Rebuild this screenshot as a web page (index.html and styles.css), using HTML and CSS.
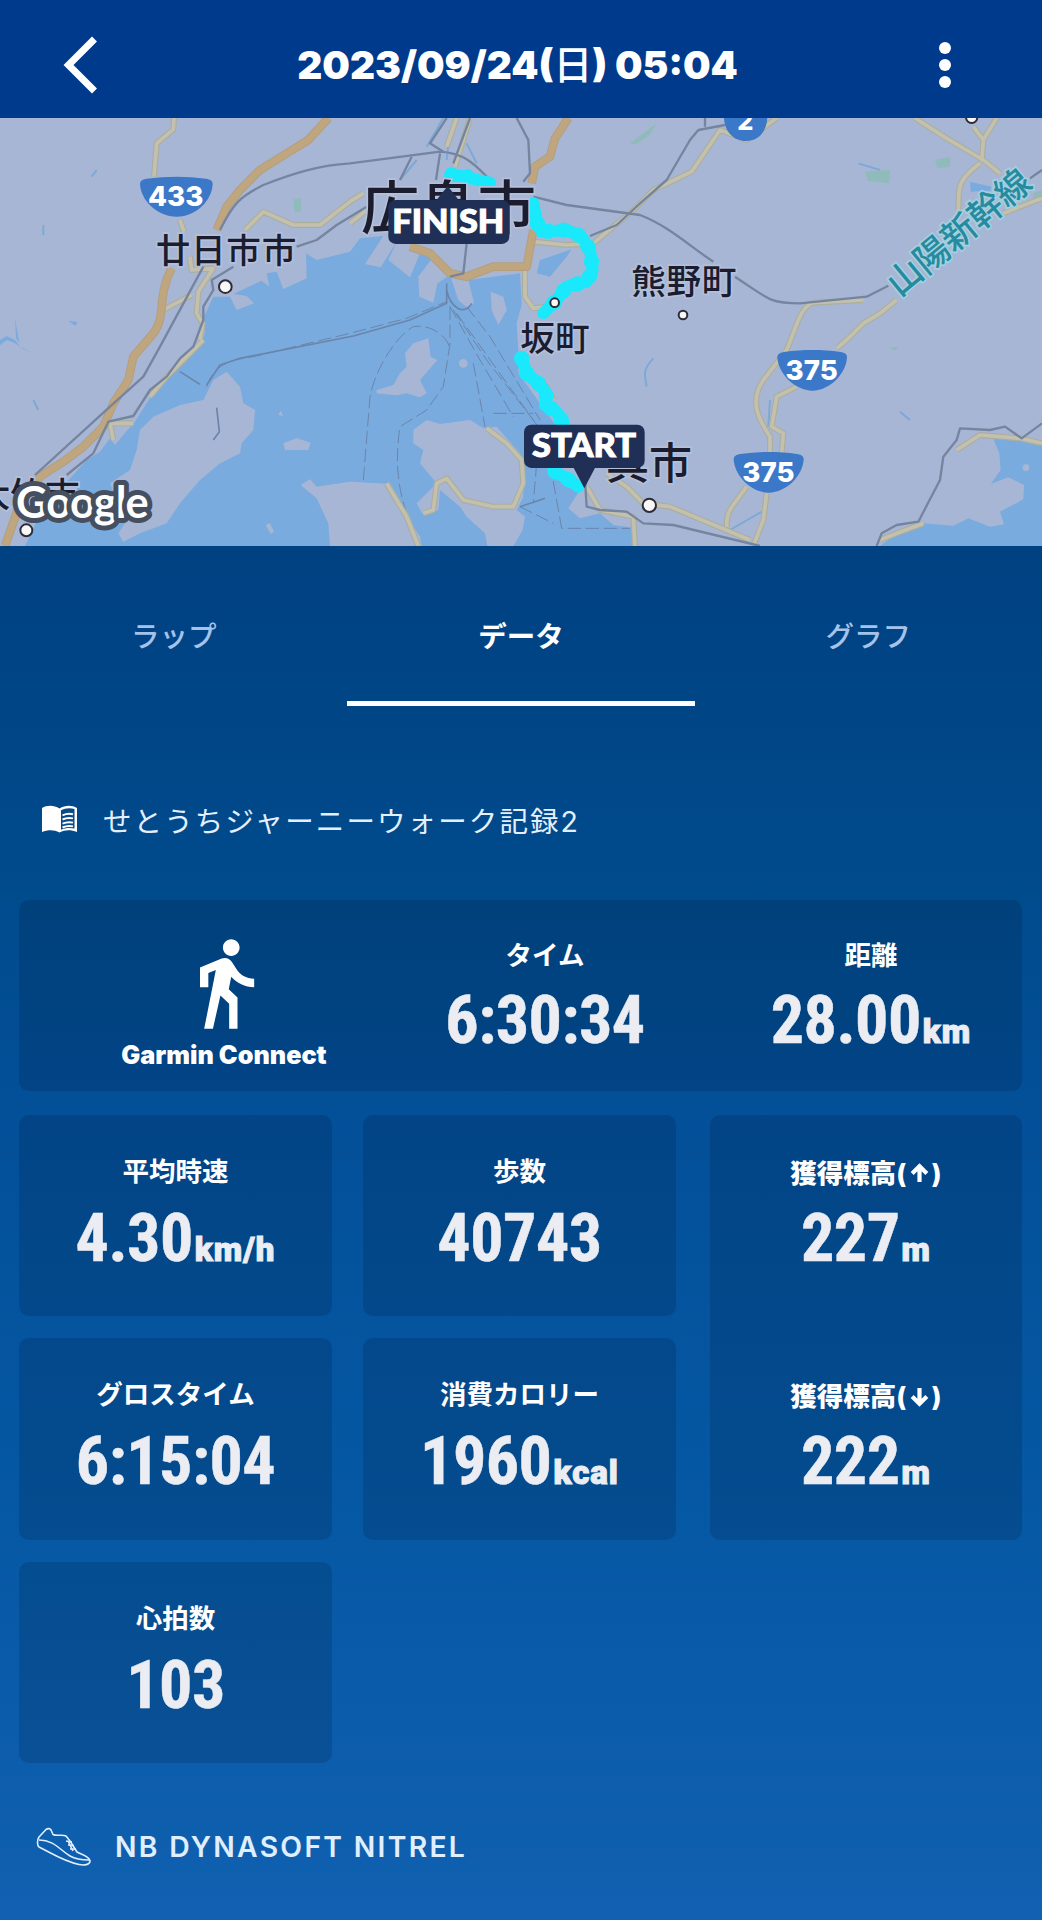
FILE: index.html
```html
<!DOCTYPE html>
<html lang="ja">
<head>
  <meta charset="UTF-8">
  <meta name="viewport" content="width=device-width, initial-scale=1">
  <title>2023/09/24(日) 05:04</title>
  <link rel="stylesheet" href="styles.css">
</head>
<body>
  <!-- Header -->
  <header class="header">
    <svg class="back-icon" viewBox="0 0 34 58"><path d="M31.500 3L5.500 29L31.500 55"/></svg>
    <h1 class="title">2023/09/24(<span class="weekday">日</span>) 05:04</h1>
    <svg class="menu-icon" viewBox="0 0 14 46"><circle cx="7" cy="6" r="6"/><circle cx="7" cy="23" r="6"/><circle cx="7" cy="40" r="6"/></svg>
  </header>

  <!-- Map -->
  <svg class="map" viewBox="0 24 3126 1284" preserveAspectRatio="none">
    <rect class="land" y="24" width="3126" height="1284"/>

    <!-- Sea -->
    <g class="water">
      <path d="M75 1308L130 1190L215 1100L260 1050L300 1025L330 985L345 1005L365 980L405 935L430 895L470 835L530 775L590 720L615 670L612 620L640 560L690 560L710 600L762 580L740 558L700 552L785 512L808 530L800 490L830 485L850 537L920 505L918 430L950 450L1050 425L1080 385L1150 378L1095 462L1142 472L1190 395L1165 450L1230 502L1262 425L1300 440L1255 500L1258 560L1300 578L1312 520L1350 495L1375 570L1400 592L1422 580L1405 510L1560 490L1565 585L1550 640L1555 720L1555 790L1620 880L1670 950L1655 1080L1740 1140L1705 1195L1740 1225L1800 1210L1840 1245L1910 1255L1900 1308Z"/>
      <path d="M1620 450L1715 418L1700 440L1650 500L1610 490Z"/>
      <path d="M2975 975L3030 985L3126 1005V1308H2640L2690 1270L2770 1240L2860 1247L2905 1225L2970 1250L3012 1243L3000 1205L3070 1168L3072 1125L3025 1102L2972 1122L3002 1080L2998 1030Z"/>
      <path d="M2910 215L2975 230L2970 242L2912 245Z"/>
      <path d="M0 690L20 678L45 690L60 710L110 735L65 715L45 700L20 690L0 706Z"/>
      <path d="M45 625L58 700L48 685ZM205 632L232 636L226 648Z"/>
    </g>
    <g class="stream">
      <path d="M1330 24L1280 110M1400 100L1430 160M1250 150L1200 210M1350 60L1340 150M2310 870L2305 950M2190 1260L2285 1205M2700 905L2730 930M100 870L115 900M130 345V375M290 180L275 200M2575 160L2640 180"/>
      <path d="M1960 745C1925 780 1935 800 1940 830"/>
    </g>

    <!-- Islands -->
    <g class="land">
      <path d="M680 785L720 830L730 880L765 900L760 960L725 1000L720 1030L660 1060L600 1110L540 1180L500 1240L420 1270L370 1295L355 1270L375 1240L330 1120L390 1080L410 1020L420 960L460 920L540 885L610 870L640 810Z"/>
      <path d="M902 1125L930 1108L950 1130L1050 1115L1170 1122L1195 1180L1260 1280L1265 1308H990L985 1240L950 1165Z"/>
      <path d="M850 1000L890 985L932 998L925 1020L855 1020ZM835 915L842 902L850 918ZM797 1245L810 1240L822 1265L812 1272Z"/>
      <path d="M1240 960L1280 930L1320 942L1410 930L1450 955L1490 950L1560 1030L1570 1110L1570 1160L1550 1200L1575 1220L1568 1260L1540 1308H1462L1455 1270L1400 1220L1380 1190L1320 1140L1315 1200L1270 1215L1250 1180L1310 1120L1260 1060L1270 1020L1240 1000Z"/>
      <path d="M1285 685L1292 740L1312 750L1260 810L1280 850L1260 862L1220 850L1190 856L1130 850V840L1180 825L1200 790L1220 770L1215 730L1240 700Z"/>
      <path d="M1472 545L1510 560L1520 600L1495 645L1475 600Z"/>
      <circle cx="1390" cy="760" r="13"/>
      <circle cx="3078" cy="1073" r="10"/>
    </g>
    <g class="park">
      <path d="M880 268L905 265L902 305L884 308ZM2595 185L2670 180L2668 220L2605 212ZM2805 150L2850 140L2850 170L2812 175ZM2668 712L2695 710L2685 722ZM3100 250L3126 240V270L3100 265ZM1890 100L1970 40L1950 75L1905 104Z"/>
    </g>

    <!-- Ferry lines -->
    <g class="ferry">
      <path d="M620 830C640 770 680 750 760 740L1050 670L1220 625L1340 575"/>
      <path d="M1350 590V700L1330 830L1280 900L1200 950C1180 1080 1200 1180 1250 1280"/>
      <path d="M1090 1110L1110 860C1130 760 1200 670 1240 650C1300 640 1350 690 1350 720"/>
      <path d="M1350 590L1440 750L1540 920M1360 600L1460 750L1600 930M1370 610L1650 1000M1400 590L1470 680L1620 930M1420 760L1455 950M1480 910H1600M1650 1060L1685 1255H1890M1560 1190L1660 1240M1610 1060L1600 1180"/>
    </g>
    <path class="ferry solid" d="M620 825L660 765L720 745L1060 678L1230 630L1340 580L1340 520M1340 540C1350 590 1390 620 1415 580M650 893L658 965L640 990M540 785L600 823M1560 1190L1635 1165"/>

    <!-- Local roads -->
    <g class="road-edge">
      <path id="roads" d="M522 24L520 58L470 100L462 200M540 330L552 365M480 605L575 555M735 360L790 305L880 345H960L1050 275L1090 250M570 440L575 480L640 475L595 545L590 610L608 640L600 690M610 690L560 740L500 800L450 860M1050 340L1100 300M1370 24L1340 110M1410 24L1365 170M1600 395L1700 405L1780 400L1900 300L1960 240L2075 185L2160 60L2240 90L2330 24M1575 480V560L1600 595L1640 590M1600 800L1640 830L1660 870M1460 955L1520 1000L1565 1050L1570 1120L1540 1190L1480 1190L1390 1170L1340 1105L1310 1120L1300 1200L1270 1210M1160 1120L1220 1220L1255 1308M1760 1130L1800 1200L1900 1220L1905 1308M1820 1090L1880 1130L1930 1180L2010 1190L2250 1290M2745 24L2840 85L2950 150L3000 190M2920 50L2950 90L2945 155M2990 24L2950 90M2940 160C2860 220 2880 240 2875 300M3010 310L3060 290L3126 265M2590 570L2440 578C2400 590 2390 650 2360 720L2290 810C2250 870 2270 920 2310 980L2310 1030M2690 570L2640 610L2590 640L2540 690L2510 715M2390 830L2330 860L2315 950L2350 970L2345 1030M2240 1130C2190 1200 2180 1200 2180 1250M2300 1150L2290 1230L2260 1308M2640 1290L2690 1270L2770 1240M2870 1020L2940 975L3060 985L3126 1000M340 990L330 940L400 940"/>
    </g>
    <use class="road" href="#roads"/>

    <!-- Highways -->
    <path class="highway-edge" d="M985 24L925 90L860 130L780 180L720 240L680 290L650 360M515 475C470 560 500 620 460 670L400 740L385 810L340 880L310 950L250 1010L190 1055L120 1100L60 1180L15 1308M1705 24L1665 85L1650 140L1605 170L1595 220M1600 360L1580 470L1480 470L1400 500L1350 490L1290 430L1230 410"/>
    <path class="highway" d="M985 24L925 90L860 130L780 180L720 240L680 290L650 360M515 475C470 560 500 620 460 670L400 740L385 810L340 880L310 950L250 1010L190 1055L120 1100L60 1180L15 1308M1705 24L1665 85L1650 140L1605 170L1595 220M1600 360L1580 470L1480 470L1400 500L1350 490L1290 430L1230 410"/>

    <!-- Railways -->
    <g class="rail">
      <path d="M105 1095L330 890L430 800L480 710L610 470M660 360C700 280 720 260 790 225C880 190 960 165 1050 160L1320 125C1400 130 1430 170 1465 205M200 1095L280 1030L325 935L400 918L450 840L500 800L540 745L580 710L610 630V590L640 540L635 510L700 470M890 410L950 390L1010 345L1100 290"/>
      <path d="M1340 24L1290 100L1330 125M1410 24L1360 160M1235 140L1200 210M1320 130L1308 210M1550 24L1585 90L1590 190L1570 215M1400 400L1390 490L1350 500"/>
      <path d="M1600 260L1700 285L1920 315C2010 350 2070 410 2140 455M2205 500C2310 570 2310 580 2400 580L2600 560L2665 527M1770 378L1850 345L1920 280L2000 210L2070 90L2095 60L2175 45M2115 24V50M3090 205L3126 180"/>
      <path d="M1755 1110L1760 1190L1800 1200L1880 1205L1930 1240L2020 1245L2280 1308M2630 1308L2645 1270L2690 1245L2755 1235L2820 1110L2830 1040L2870 990L2880 955L2970 960L3015 950L3065 985L3126 940"/>
    </g>

    <!-- Recorded route -->
    <g class="route">
      <path d="M1355 195L1400 200L1440 212L1470 218M1600 280L1612 340L1625 365L1700 360L1745 380L1770 420L1778 480L1760 515L1700 530L1670 570L1630 610"/>
      <path class="route-dots" d="M1355 195L1400 200L1440 212M1612 340L1625 365L1700 360L1745 380L1770 420L1778 480L1760 515L1700 530L1670 570L1630 610"/>
      <path d="M1565 745L1580 790L1615 820L1640 850L1635 885L1670 905L1690 940M1665 1085L1700 1105L1735 1130"/>
      <path class="route-dots" d="M1565 745L1580 790L1615 820L1640 850L1635 885L1670 905L1690 940M1665 1085L1700 1105L1735 1130"/>
    </g>

    <!-- Route shields -->
    <g class="shield">
      <path d="M420 222C420 212 428 208 440 206C500 198 560 198 618 206C630 208 638 212 638 222C636 270 590 320 530 320C470 320 422 270 420 222Z"/>
      <path d="M2332 742C2332 732 2340 728 2352 726C2410 718 2465 718 2522 726C2534 728 2541 732 2541 742C2539 790 2490 842 2437 842C2384 842 2334 790 2332 742Z"/>
      <path d="M2201 1048C2201 1038 2209 1034 2221 1032C2279 1024 2334 1024 2391 1032C2403 1034 2411 1038 2411 1048C2409 1096 2360 1148 2306 1148C2252 1148 2203 1096 2201 1048Z"/>
      <path d="M2172 24H2302C2300 65 2275 93 2238 93C2200 93 2174 65 2172 24Z"/>
      <text x="527" y="289">433</text>
      <text x="2435" y="809">375</text>
      <text x="2305" y="1115">375</text>
      <text x="2236" y="61" class="small">2</text>
    </g>

    <!-- City markers -->
    <g class="city">
      <circle cx="676" cy="530" r="19"/>
      <circle cx="79" cy="1261" r="18"/>
      <circle cx="1664" cy="578" r="13"/>
      <circle cx="2049" cy="615" r="13"/>
      <circle cx="1948" cy="1186" r="20"/>
      <circle cx="2915" cy="22" r="17"/>
    </g>

    <!-- Place names -->
    <g class="place">
      <text x="467" y="459" textLength="422">廿日市市</text>
      <text x="1083" y="358" class="major">広島市</text>
      <text x="1561" y="722">坂町</text>
      <text x="1894" y="552" textLength="315">熊野町</text>
      <text x="1818" y="1108" class="city-name">呉市</text>
      <text x="-73" y="1192">大竹市</text>
      <text class="line-name" transform="translate(2698 563) rotate(-39.500)">山陽新幹線</text>
    </g>

    <!-- Pins -->
    <g class="pin">
      <rect x="1165" y="270" width="363" height="132" rx="22"/>
      <path d="M1308 272L1343 228L1378 272Z"/>
      <text x="1345" y="369" textLength="336" lengthAdjust="spacingAndGlyphs">FINISH</text>
      <rect x="1572" y="944" width="362" height="130" rx="22"/>
      <path d="M1720 1072H1786L1753 1135Z"/>
      <text x="1752" y="1042" textLength="312" lengthAdjust="spacingAndGlyphs">START</text>
    </g>
    <text class="google" x="48" y="1223" textLength="398">Google</text>
  </svg>

  <main class="content">
    <!-- Tabs -->
    <nav class="tabs">
      <div class="tab">ラップ</div>
      <div class="tab active">データ</div>
      <div class="tab">グラフ</div>
    </nav>

    <!-- Memo -->
    <div class="memo">
      <svg class="book-icon" viewBox="0 0 35 27">
        <path class="book-fill" d="M0 2.500C5-.500 12-.500 17.500 3C23-.500 30-.500 35 2.500V26.500C29 24 23 24 17.500 27C12 24 6 24 0 26.500Z"/>
        <path class="book-page" d="M19 4.800C23 2.500 28 2.200 32.500 3.500V23C28 22 23 22.300 19 24.200Z"/>
        <path class="book-lines" d="M20.500 9.800C24 8.200 28 8 31 8.700M20.500 14C24 12.400 28 12.200 31 12.900M20.500 18.200C24 16.600 28 16.400 31 17.100M20.500 22C24 20.400 28 20.200 31 20.900"/>
      </svg>
      <span>せとうちジャーニーウォーク記録2</span>
    </div>

    <!-- Summary -->
    <section class="card summary">
      <div class="source">
        <svg class="walk-icon" viewBox="0 0 24 24"><path d="M13.500 5.500c1.100 0 2-.9 2-2s-.9-2-2-2-2 .9-2 2 .9 2 2 2zM9.800 8.900L7 23h2.100l1.800-8 2.100 2v6h2v-7.500l-2.100-2 .6-3C14.800 12 16.800 13 19 13v-2c-1.900 0-3.500-1-4.300-2.400l-1-1.600c-.4-.6-1-1-1.700-1-.3 0-.5.1-.8.1L6 8.300V13h2V9.600l1.800-.7z"/></svg>
        <div class="source-name">Garmin Connect</div>
      </div>
      <div class="stat">
        <div class="label">タイム</div>
        <div class="value">6:30:34</div>
      </div>
      <div class="stat">
        <div class="label">距離</div>
        <div class="value">28.00<span class="unit">km</span></div>
      </div>
    </section>

    <!-- Details -->
    <section class="grid">
      <div class="card stat">
        <div class="label">平均時速</div>
        <div class="value">4.30<span class="unit">km/h</span></div>
      </div>
      <div class="card stat">
        <div class="label">歩数</div>
        <div class="value">40743</div>
      </div>
      <div class="card tall">
        <div class="stat">
          <div class="label elevation">獲得標高(<svg class="arrow" viewBox="0 0 18 20"><path d="M9 18V3M2 10L9 3L16 10"/></svg>)</div>
          <div class="value">227<span class="unit">m</span></div>
        </div>
        <div class="stat">
          <div class="label elevation">獲得標高(<svg class="arrow" viewBox="0 0 18 20"><path d="M9 2V17M2 10L9 17L16 10"/></svg>)</div>
          <div class="value">222<span class="unit">m</span></div>
        </div>
      </div>
      <div class="card stat">
        <div class="label">グロスタイム</div>
        <div class="value">6:15:04</div>
      </div>
      <div class="card stat">
        <div class="label">消費カロリー</div>
        <div class="value">1960<span class="unit">kcal</span></div>
      </div>
      <div class="card stat">
        <div class="label">心拍数</div>
        <div class="value">103</div>
      </div>
    </section>

    <!-- Shoes -->
    <div class="shoes">
      <svg class="shoe-icon" viewBox="0 0 56 40">
        <path d="M3 10L10 2.500C12 1 14 1.500 15 3L17 7.500C21 9.500 26 7 30 9L34 14L41 25C46 28 53 29 54 34C54 38 48 38.500 43 37.500C27 34 17 27 3 20C1 18 1 13 3 10Z"/>
        <path d="M3 13C18 13 24 23 34 29C41 33 48 33 53 33M30 14L36 15M32 18L38 18.500M34 22L40 22M32 14L37 24"/>
      </svg>
      <span>NB DYNASOFT NITREL</span>
    </div>
  </main>
</body>
</html>
```
FILE: styles.css
```css
:root {
  --color-header: #003a8c;
  --color-card: rgba(0, 20, 50, 0.18);
  --color-value: #ebedf3;
  --color-land: #a8b6d5;
  --color-water: #7aabdf;
  --color-pin: #1f2f55;
  --font-family: Inter, "Noto Sans CJK JP", sans-serif;
  --radius: 10px;
}

* {
  box-sizing: border-box;
  margin: 0;
  padding: 0;
}

body {
  width: 1042px;
  height: 1920px;
  overflow: hidden;
  font-family: var(--font-family);
  color: #fff;
  background: #00407f;
}

svg {
  display: block;
}

/* === Header === */
.header {
  display: flex;
  align-items: center;
  justify-content: space-between;
  height: 118px;
  padding: 11px 90px 0 66px;
  background: var(--color-header);
}
.back-icon {
  width: 34px;
  height: 58px;
  margin-left: -3px;
  fill: none;
  stroke: #fff;
  stroke-width: 7;
}
.title {
  font-size: 38.8px;
  font-weight: 900;
  line-height: 50px;
  white-space: nowrap;
}
.weekday {
  font-weight: 500;
}
.menu-icon {
  width: 14px;
  height: 46px;
  fill: #fff;
}

/* === Map === */
.map {
  width: 1042px;
  height: 428px;
}
.land { fill: var(--color-land); }
.water { fill: var(--color-water); }
.park { fill: #8fbcba; }
.stream {
  fill: none;
  stroke: #7da9d6;
  stroke-width: 6;
}
.road-edge, .road, .highway-edge, .highway, .rail, .ferry, .route {
  fill: none;
  stroke-linejoin: round;
}
.road-edge { stroke: #abae9f; stroke-width: 18; }
.road { stroke: #c3c1ae; stroke-width: 11; }
.highway-edge { stroke: #b39f80; stroke-width: 26; }
.highway { stroke: #bfa67f; stroke-width: 20; }
.rail { stroke: #75849f; stroke-width: 7; }
.ferry {
  stroke: #6a85ab;
  stroke-width: 3;
  stroke-dasharray: 40 14;
}
.ferry.solid {
  stroke-width: 5;
  stroke-dasharray: none;
}
.route {
  stroke: #19e9fb;
  stroke-width: 36;
  stroke-linecap: round;
}
.route-dots {
  stroke-width: 46;
  stroke-dasharray: 1 46;
}
.shield {
  fill: #3c78c8;
}
.shield text {
  fill: #fff;
  font: 800 83px Inter, sans-serif;
  text-anchor: middle;
}
.shield .small { font-size: 76px; }
.city {
  fill: #f8f6f6;
  stroke: #2b2c37;
  stroke-width: 6;
}
.place {
  fill: #1b1d2f;
  stroke: #b4c0da;
  stroke-width: 10;
  paint-order: stroke;
  font: 500 104px "Noto Sans CJK JP", sans-serif;
}
.place .major { font-size: 175px; }
.place .city-name { font-size: 129px; }
.place .line-name {
  fill: #258b9f;
  stroke: #a5cfdf;
  font-size: 105px;
}
.pin { fill: var(--color-pin); }
.pin text {
  fill: #fff;
  stroke: #fff;
  stroke-width: 3;
  font: 900 95px Lato, sans-serif;
  text-anchor: middle;
}
.google {
  fill: #fff;
  stroke: #454f60;
  stroke-width: 30;
  stroke-linejoin: round;
  paint-order: stroke;
  font: 700 130px Lato, sans-serif;
}

/* === Content === */
.content {
  height: 1374px;
  padding: 0 20px 0 19px;
  background: linear-gradient(#004182 0%, #004b8c 25%, #034f98 40%, #0558a4 70%, #1160b1 100%);
}

/* === Tabs === */
.tabs {
  display: flex;
  height: 160px;
  margin: 0 -20px 0 -19px;
}
.tab {
  flex: 1;
  padding-top: 70px;
  border-bottom: 5px solid transparent;
  font-size: 28.5px;
  font-weight: 500;
  line-height: 42px;
  text-align: center;
  color: #a5c3ea;
}
.tab.active {
  border-color: #fff;
  font-weight: 700;
  color: #fff;
}

/* === Memo === */
.memo {
  display: flex;
  align-items: center;
  gap: 26px;
  height: 44px;
  margin-top: 94px;
  padding-left: 23px;
  font-size: 28.5px;
  letter-spacing: 2.1px;
  line-height: 44px;
  color: #e4f0ff;
}
.book-icon {
  width: 35px;
  height: 28px;
  margin-top: -6px;
}
.book-fill { fill: #fff; }
.book-page { fill: #064a8a; }
.book-lines {
  fill: none;
  stroke: #fff;
  stroke-width: 2;
}

/* === Cards === */
.card {
  background: var(--color-card);
  border-radius: var(--radius);
}
.stat {
  padding-top: 36px;
  text-align: center;
}
.label {
  font-size: 26.5px;
  font-weight: 600;
  line-height: 40px;
}
.elevation {
  position: relative;
  top: 2px;
  font-weight: 800;
}
.value {
  margin-top: 8px;
  font-family: "Roboto Condensed", Roboto, sans-serif;
  font-size: 66px;
  font-stretch: 75%;
  font-weight: 700;
  letter-spacing: -0.5px;
  line-height: 80px;
  color: var(--color-value);
  white-space: nowrap;
  -webkit-text-stroke: 0.5px var(--color-value);
}
.unit {
  margin-left: 2px;
  font-family: Roboto, sans-serif;
  font-size: 33px;
  font-stretch: 100%;
  font-weight: 900;
  letter-spacing: 1px;
  -webkit-text-stroke: 1px var(--color-value);
}

.summary {
  display: grid;
  grid-template-columns: 292px 350px 302px;
  height: 191px;
  margin-top: 56px;
  padding-left: 59px;
}
.summary .stat {
  padding-top: 35px;
}
.summary .value {
  margin-top: 6px;
}
.source {
  padding-top: 33px;
}
.walk-icon {
  width: 100px;
  height: 100px;
  margin: 0 auto;
  transform: translateX(1px);
  fill: #fff;
}
.source-name {
  margin-top: 6px;
  font-size: 25.2px;
  font-weight: 900;
  line-height: 32px;
  text-align: center;
}

.grid {
  display: grid;
  grid-template-columns: 313px 313px 1fr;
  grid-template-rows: 201px 202px 201px;
  gap: 22px 31px;
  margin-top: 24px;
}
.tall {
  display: grid;
  grid-template-rows: 223px 1fr;
  grid-row: span 2;
  margin-left: 3px;
}
.arrow {
  display: inline-block;
  width: 19px;
  height: 21px;
  margin: 0 3px;
  vertical-align: -1px;
  fill: none;
  stroke: #fff;
  stroke-width: 4;
}

/* === Shoes === */
.shoes {
  display: flex;
  align-items: center;
  gap: 23px;
  margin-top: 64px;
  padding-left: 17px;
  font-size: 28.3px;
  font-weight: 600;
  letter-spacing: 2.3px;
  line-height: 40px;
  color: #e0efff;
}
.shoe-icon {
  width: 56px;
  height: 40px;
  fill: none;
  stroke: #e0efff;
  stroke-width: 1.6;
  stroke-linejoin: round;
}
```
